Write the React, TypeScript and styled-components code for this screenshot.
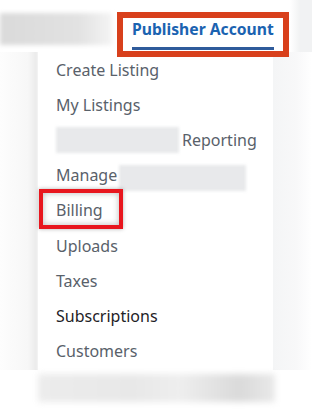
import styled, { createGlobalStyle } from "styled-components"

const GlobalStyle = createGlobalStyle`
  html, body {
    margin: 0;
    padding: 0;
    background: #ffffff;
  }
  body {
    font-family: "Noto Sans", "Open Sans", sans-serif;
  }
`

const Page = styled.div`
  position: relative;
  width: 312px;
  height: 418px;
  overflow: hidden;
  background: #ffffff;
`

const Header = styled.header`
  display: flex;
  height: 52px;
  background: linear-gradient(to right, #ffffff 0, #ffffff 290px, #f1f2f3 300px);
`

const BlurBar = styled.div`
  width: 112px;
  height: 32px;
  margin-top: 13px;
  background: linear-gradient(to right, #dadada, #e2e2e2 70%, #f4f4f4);
  filter: blur(2px);
`

const Tab = styled.div`
  margin: 19px 0 0 20px;
  align-self: flex-start;
  font-size: 15.7px;
  line-height: 20px;
  font-weight: 700;
  color: #1b63b1;
  padding-bottom: 8px;
  border-bottom: 3px solid #2f5b9b;
  white-space: nowrap;
`

const Body = styled.div`
  display: flex;
`

const Gutter = styled.div`
  width: 38px;
  height: 318px;
  background: linear-gradient(to right, #fdfdfd 0, #f7f7f7 28px, #ebebeb 36px, #f4f4f4 38px);
`

const Side = styled.div`
  flex: 1;
  height: 318px;
  background: linear-gradient(to right, #f4f5f6, #f8f8f9 60%, #ffffff);
`

const Menu = styled.ul`
  list-style: none;
  margin: 0;
  padding: 0;
  width: 235px;
  background: #ffffff;
`

const Item = styled.li<{ $strong?: boolean }>`
  display: flex;
  align-items: center;
  height: 35.2px;
  padding-left: 18px;
  font-size: 16px;
  color: ${(p) => (p.$strong ? "#1e2226" : "#59616a")};
  white-space: nowrap;
`

const Redacted = styled.span<{ $w: number; $shift?: number }>`
  display: inline-block;
  width: ${(p) => p.$w}px;
  height: 26px;
  margin-top: ${(p) => p.$shift ?? 0}px;
  background: #e8e9eb;
  filter: blur(1.5px);
`

const Footer = styled.div`
  display: flex;
  height: 48px;
  padding-left: 38px;
`

const FooterBlur = styled.div`
  width: 237px;
  height: 28px;
  margin-top: 4px;
  background: linear-gradient(to right, #ececec, #e8e8e8 40%, #eeeeee 60%, #dadada 85%, #e9e9e9);
  filter: blur(3px);
`

const Callout = styled.div<{ $color: string; $w: number }>`
  position: absolute;
  box-sizing: border-box;
  border: ${(p) => p.$w}px solid ${(p) => p.$color};
`

const items: { label: string; strong?: boolean }[] = [
  { label: "Create Listing" },
  { label: "My Listings" },
  { label: "Reporting" },
  { label: "Manage" },
  { label: "Billing" },
  { label: "Uploads" },
  { label: "Taxes" },
  { label: "Subscriptions", strong: true },
  { label: "Customers" },
]

export default function App() {
  return (
    <>
      <GlobalStyle />
      <Page>
        <Header>
          <BlurBar />
          <Tab>Publisher Account</Tab>
        </Header>
        <Body>
          <Gutter />
          <Menu>
            {items.map((it) => (
              <Item key={it.label} $strong={it.strong}>
                {it.label === "Reporting" && <Redacted $w={123} style={{ marginRight: 3 }} />}
                {it.label}
                {it.label === "Manage" && <Redacted $w={127} $shift={5} style={{ marginLeft: 2 }} />}
              </Item>
            ))}
          </Menu>
          <Side />
        </Body>
        <Footer>
          <FooterBlur />
        </Footer>
        <Callout $color="#d8401c" $w={6} style={{ left: 117, top: 12, width: 172, height: 45 }} />
        <Callout
          $color="#e8161e"
          $w={4}
          style={{
            left: 39,
            top: 189,
            width: 84,
            height: 40,
            boxShadow: "inset 0 0 6px rgba(0,0,0,0.28), 0 0 4px rgba(0,0,0,0.3)",
          }}
        />
      </Page>
    </>
  )
}
